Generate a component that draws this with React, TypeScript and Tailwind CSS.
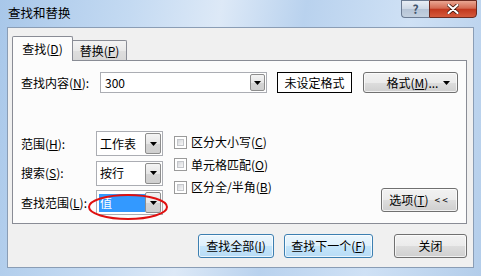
import React from 'react';

const Arrow = () => (
  <svg width="7" height="4" viewBox="0 0 7 4" className="block">
    <path d="M0 0 H7 L3.5 4 Z" fill="#000" />
  </svg>
);

const DropBtn = ({ className = '' }: { className?: string }) => (
  <div
    className={`flex items-center justify-center border border-[#8d8d8d] rounded-[2px] bg-[linear-gradient(#f4f4f4,#e6e6e6_50%,#d4d4d4_51%,#cfcfcf)] ${className}`}
  >
    <Arrow />
  </div>
);

const Button = ({
  children,
  className = '',
  blue = false,
}: {
  children: React.ReactNode;
  className?: string;
  blue?: boolean;
}) => (
  <div
    className={`flex items-center justify-center h-[24px] rounded-[3px] border ${
      blue
        ? 'border-[#3c7fb1] bg-[linear-gradient(#ecf6fd,#dcf0fc_50%,#c4e5fa_51%,#b8dcf6)]'
        : 'border-[#707070] bg-[linear-gradient(#f2f2f2,#ebebeb_50%,#dddddd_51%,#cfcfcf)]'
    } shadow-[inset_0_0_0_1px_rgba(255,255,255,0.7)] ${className}`}
  >
    {children}
  </div>
);

const Select = ({ value, selected = false }: { value: string; selected?: boolean }) => (
  <div className="flex items-stretch w-[67px] h-[25px] border border-[#abadb3] bg-white p-[1px]">
    <div className="flex-1 flex items-center pl-[1px]">
      {selected ? (
        <span className="flex items-center w-[46px] h-[18px] bg-[#3399ff] text-white pl-[1px]">{value}</span>
      ) : (
        <span className="pl-[1px]">{value}</span>
      )}
    </div>
    <DropBtn className="w-[16px]" />
  </div>
);

const Check = ({ label }: { label: React.ReactNode }) => (
  <div className="flex items-center h-[18px]">
    <div className="w-[13px] h-[13px] border border-[#9a9a9a] bg-white p-[2px]">
      <div className="w-full h-full bg-[linear-gradient(135deg,#d4d6da,#f8f8f8)] border border-[#c4c6ca]" />
    </div>
    <span className="ml-[4px]">{label}</span>
  </div>
);

export default function App() {
  return (
    <div className="relative w-[481px] h-[276px] overflow-hidden text-[12px] leading-[16px] text-black font-['Noto_Sans_CJK_SC','Noto_Sans',sans-serif] bg-[linear-gradient(100deg,#a8c7e9_0%,#c4daf2_25%,#dde9f7_42%,#b9d2ee_58%,#cfe1f5_78%,#b3cdea_100%)]">
      {/* title bar */}
      <div className="flex items-start h-[27px]">
        <div className="pl-[8px] pt-[5px] text-[12.5px]">查找和替换</div>
        <div className="ml-auto mr-[4px] flex">
          <div className="w-[28px] h-[18px] border border-[#6b7c93] border-r-0 rounded-bl-[4px] bg-[linear-gradient(#e8eef5,#cdd8e5_50%,#b5c4d6_51%,#c3d0df)] flex items-center justify-center text-[#42556d] text-[12px] font-bold">
            ?
          </div>
          <div className="w-[48px] h-[18px] border border-[#6b2a20] rounded-br-[4px] bg-[linear-gradient(#eaa692,#d46a52_45%,#c2381e_52%,#d45a3c)] flex items-center justify-center">
            <svg width="12" height="10" viewBox="0 0 12 10">
              <path d="M1.5 1 L10.5 9 M10.5 1 L1.5 9" stroke="#3b1108" strokeWidth="3.6" strokeLinecap="round" />
              <path d="M1.5 1 L10.5 9 M10.5 1 L1.5 9" stroke="#fff" strokeWidth="2.2" strokeLinecap="round" />
            </svg>
          </div>
        </div>
      </div>

      {/* client area */}
      <div className="mx-[7px] h-[241px] border border-[#8a9db5] bg-[#f0f0f0] pl-[4px] pt-[8px]">
        {/* tabs */}
        <div className="flex items-end h-[24px]">
          <div className="relative z-10 -mb-px w-[61px] h-[25px] border border-[#898c95] border-b-0 bg-[#fcfcfc] rounded-t-[2px] flex items-center justify-center">
            查找(<u>D</u>)
          </div>
          <div className="w-[54px] h-[20px] border border-[#898c95] border-l-0 border-b-0 rounded-tr-[2px] bg-[linear-gradient(#f3f3f3,#e9e9e9_50%,#dedede_51%,#d8d8d8)] flex items-center justify-center">
            替换(<u>P</u>)
          </div>
        </div>

        {/* tab panel */}
        <div className="w-[455px] h-[164px] border border-[#898c95] bg-[#fcfcfc] pt-[11px]">
          <div className="flex items-center h-[21px]">
            <div className="pl-[8px] w-[87px]">
              查找内容(<u>N</u>):
            </div>
            <div className="flex items-stretch w-[167px] h-[21px] border border-[#abadb3] bg-white p-[1px]">
              <div className="flex-1 flex items-center pl-[3px]">300</div>
              <DropBtn className="w-[15px]" />
            </div>
            <div className="ml-[10px] w-[75px] h-[21px] border border-black bg-white flex items-center justify-center">
              未设定格式
            </div>
            <Button className="ml-[11px] w-[95px] !h-[21px] relative">
              <span className="ml-[4px]">
                格式(<u>M</u>)...
              </span>
              <span className="absolute right-[7px] top-[8px]">
                <Arrow />
              </span>
            </Button>
          </div>

          <div className="flex mt-[38px]">
            <div className="flex flex-col gap-[4.5px]">
              <div className="flex items-center">
                <div className="pl-[8px] w-[83px]">
                  范围(<u>H</u>):
                </div>
                <Select value="工作表" />
              </div>
              <div className="flex items-center">
                <div className="pl-[8px] w-[83px]">
                  搜索(<u>S</u>):
                </div>
                <Select value="按行" />
              </div>
              <div className="flex items-center">
                <div className="pl-[8px] w-[83px]">
                  查找范围(<u>L</u>):
                </div>
                <Select value="值" selected />
              </div>
            </div>

            <div className="ml-[11px] mt-[2px] flex flex-col gap-[4.5px]">
              <Check label={<>区分大小写(<u>C</u>)</>} />
              <Check label={<>单元格匹配(<u>O</u>)</>} />
              <Check label={<>区分全/半角(<u>B</u>)</>} />
            </div>

            <Button className="ml-auto mr-[8px] mt-[57px] w-[77px]">
              选项(<u>T</u>)<span className="ml-[6px] text-[10px] tracking-[2px]">&lt;&lt;</span>
            </Button>
          </div>
        </div>

        {/* bottom buttons */}
        <div className="w-[455px] flex justify-end mt-[10px]">
          <Button blue className="w-[76px]">
            查找全部(<u>I</u>)
          </Button>
          <Button blue className="ml-[10px] w-[89px] !border-[#3c7fb1]">
            查找下一个(<u>F</u>)
          </Button>
          <Button className="ml-[21px] w-[73px]">关闭</Button>
        </div>
      </div>

      {/* red annotation ellipse */}
      <svg className="absolute left-0 top-0 pointer-events-none" width="481" height="276">
        <ellipse cx="128" cy="207" rx="39" ry="12" fill="none" stroke="#e01010" strokeWidth="2" />
      </svg>
    </div>
  );
}
